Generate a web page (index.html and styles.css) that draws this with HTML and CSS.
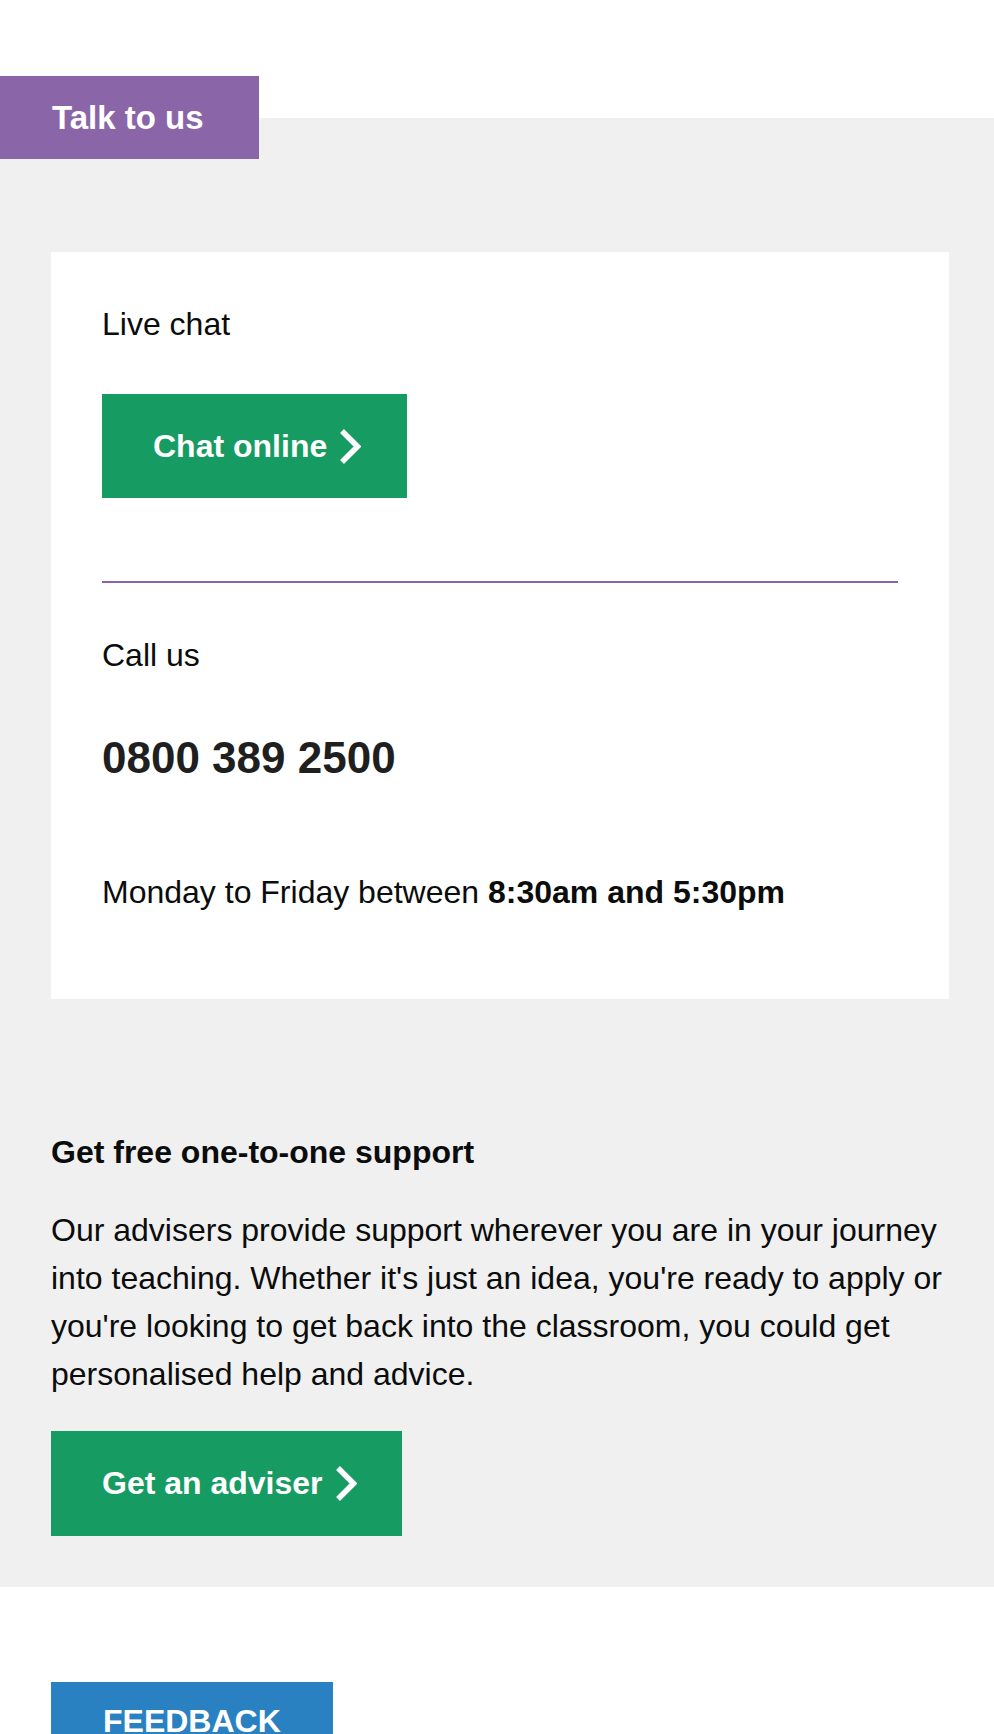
FILE: index.html
```html
<!DOCTYPE html>
<html lang="en">
<head>
<meta charset="utf-8">
<title>Talk to us</title>
<link rel="stylesheet" href="styles.css">
</head>
<body>
<section class="talk">
  <h2 class="talk-tab">Talk to us</h2>
  <div class="talk-body">
    <div class="contact-card">
      <p class="contact-label">Live chat</p>
      <a class="btn btn-green btn-chat" href="#">Chat online
        <svg class="chevron" width="22" height="35" viewBox="0 0 22 35" aria-hidden="true"><polyline points="3,2 18.5,17.5 3,33" fill="none" stroke="#fff" stroke-width="5.5"/></svg>
      </a>
      <hr class="contact-rule">
      <p class="contact-label call-label">Call us</p>
      <p class="phone">0800 389 2500</p>
      <p class="hours">Monday to Friday between <strong>8:30am and 5:30pm</strong></p>
    </div>
    <h3 class="support-title">Get free one-to-one support</h3>
    <p class="support-text">Our advisers provide support wherever you are in your journey into teaching. Whether it's just an idea, you're ready to apply or you're looking to get back into the classroom, you could get personalised help and advice.</p>
    <a class="btn btn-green btn-adviser" href="#">Get an adviser
      <svg class="chevron" width="22" height="35" viewBox="0 0 22 35" aria-hidden="true"><polyline points="3,2 18.5,17.5 3,33" fill="none" stroke="#fff" stroke-width="5.5"/></svg>
    </a>
  </div>
</section>
<div class="feedback-wrap">
  <a class="btn-feedback" href="#">Feedback</a>
</div>
</body>
</html>
```
FILE: styles.css
```css
html, body {
  margin: 0;
  padding: 0;
  background: #ffffff;
}

body {
  font-family: "Liberation Sans", Arial, Helvetica, sans-serif;
  font-size: 32px;
  line-height: 48px;
  color: #0b0c0c;
}

p, h2, h3 {
  margin: 0;
}

.talk {
  display: flow-root;
  margin-top: 118px;
  background: #f0f0f0;
  padding-bottom: 51px;
}

.talk-tab {
  display: block;
  width: fit-content;
  margin: -42px 0 0;
  padding: 0 55px 0 52px;
  height: 83px;
  line-height: 83px;
  font-size: 33px;
  font-weight: bold;
  color: #ffffff;
  background: #8a66a9;
}

.talk-body {
  padding: 0 45px 0 51px;
}

.contact-card {
  margin-top: 93px;
  background: #ffffff;
  padding: 48px 51px 83px;
}

.btn {
  display: inline-flex;
  align-items: center;
  gap: 12px;
  padding: 28px 45px 28px 51px;
  font-weight: bold;
  color: #ffffff;
  text-decoration: none;
}

.btn-green {
  background: #169b62;
}

.chevron {
  display: block;
  flex: none;
}

.btn-chat {
  margin-top: 46px;
  padding-right: 46px;
}

.contact-rule {
  margin: 83px 0 0;
  border: 0;
  height: 2px;
  background: #8a66a9;
}

.call-label {
  margin-top: 48px;
}

.phone {
  margin-top: 46px;
  font-size: 44px;
  line-height: 66px;
  font-weight: bold;
  color: #1f1f1f;
}

.hours {
  margin-top: 77px;
}

.support-title {
  margin-top: 129px;
  font-size: 32px;
  font-weight: bold;
}

.support-text {
  margin-top: 30px;
  margin-right: -8px;
}

.btn-adviser {
  margin-top: 33px;
  padding-bottom: 29px;
}

.feedback-wrap {
  padding: 95px 0 0 51px;
}

.btn-feedback {
  display: inline-block;
  padding: 15px 52px;
  background: #2a81c1;
  color: #ffffff;
  font-weight: bold;
  text-transform: uppercase;
  text-decoration: none;
}
```
